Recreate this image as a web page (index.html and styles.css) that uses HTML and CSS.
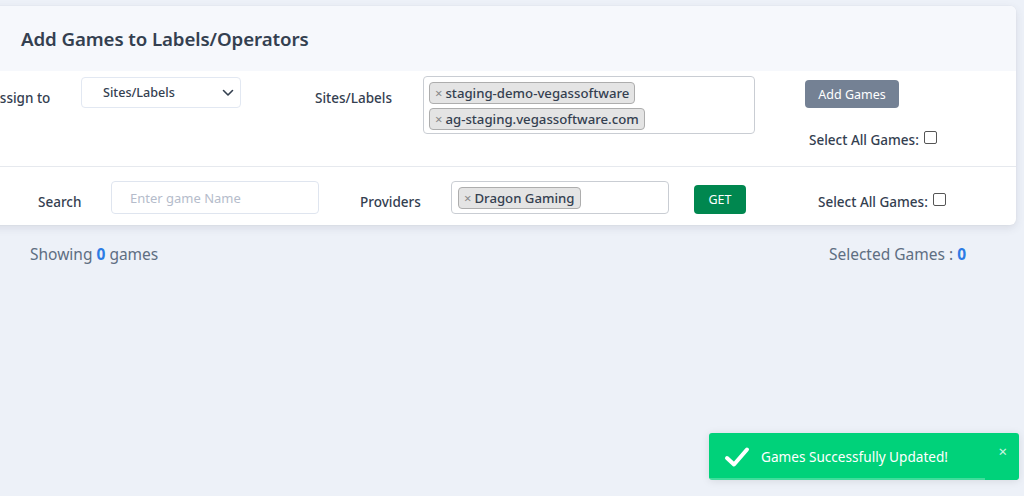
FILE: index.html
```html
<!DOCTYPE html>
<html>
<head>
<meta charset="utf-8">
<link rel="stylesheet" href="styles.css">
</head>
<body>
<div class="page">
  <div class="card">
    <div class="card-header">
      <h2 class="title">Add Games to Labels/Operators</h2>
    </div>
    <div class="row row-assign">
      <div class="label label-assign">Assign to</div>
      <div class="select">
        <span>Sites/Labels</span>
        <svg class="chev" width="12" height="8" viewBox="0 0 12 8"><path d="M1.5 1.5 L6 6 L10.5 1.5" fill="none" stroke="#344050" stroke-width="1.6" stroke-linecap="round" stroke-linejoin="round"/></svg>
      </div>
      <div class="label label-sites">Sites/Labels</div>
      <div class="multi multi-sites">
        <span class="tag"><span class="x">×</span>staging-demo-vegassoftware</span>
        <span class="tag"><span class="x">×</span>ag-staging.vegassoftware.com</span>
      </div>
      <div class="actions">
        <button class="btn btn-secondary">Add Games</button>
        <label class="check-label">Select All Games: <span class="checkbox"></span></label>
      </div>
    </div>
    <div class="row row-search">
      <div class="label label-search">Search</div>
      <div class="input">Enter game Name</div>
      <div class="label label-providers">Providers</div>
      <div class="multi multi-providers">
        <span class="tag"><span class="x">×</span>Dragon Gaming</span>
      </div>
      <button class="btn btn-success">GET</button>
      <label class="check-label check-2">Select All Games: <span class="checkbox"></span></label>
    </div>
  </div>
  <div class="summary">
    <div>Showing <b>0</b> games</div>
    <div>Selected Games : <b>0</b></div>
  </div>
</div>
<div class="toast">
  <svg class="check" width="26" height="22" viewBox="0 0 26 22"><path d="M3 12 L10 18.5 L23 3.5" fill="none" stroke="#fff" stroke-width="4" stroke-linecap="round" stroke-linejoin="round"/></svg>
  <span class="toast-text">Games Successfully Updated!</span>
  <span class="toast-close">×</span>
  <div class="toast-bar"></div>
</div>
</body>
</html>
```

FILE: styles.css
```css
* { box-sizing: border-box; }
html, body { margin: 0; padding: 0; }
body {
  background: #edf1f8;
  font-family: "Noto Sans", "Open Sans", sans-serif;
  color: #344050;
  width: 1024px;
  height: 496px;
  overflow: hidden;
  position: relative;
}
.page { padding-top: 6px; }
.card {
  margin-left: -40px;
  width: 1056px;
  background: #fff;
  border-radius: 6px;
  box-shadow: 0 3px 8px rgba(65, 69, 88, 0.12), 0 0 2px rgba(0,0,0,0.05);
  overflow: hidden;
}
.card-header {
  background: #f6f8fc;
  height: 65px;
  display: flex;
  align-items: center;
  padding-left: 61px;
}
.title {
  margin: 0;
  font-size: 18.7px;
  font-weight: 600;
  color: #344050;
  letter-spacing: -0.1px;
}
.row {
  display: flex;
  align-items: flex-start;
}
.row-assign {
  height: 96px;
  padding-top: 5px;
  border-bottom: 1px solid #e6e9ee;
}
.label {
  font-size: 13.5px;
  font-weight: 500;
  color: #344050;
}
.label-assign { margin-left: 31px; margin-top: 13px; width: 90px; }
.select {
  width: 160px;
  height: 31px;
  border: 1px solid #e2e8f2;
  border-radius: 4px;
  display: flex;
  align-items: center;
  padding-left: 21px;
  padding-right: 6px;
  font-size: 12.6px;
  font-weight: 500;
  margin-top: 1px;
}
.select span { flex: 1; }
.label-sites { margin-left: 74px; margin-top: 13px; width: 108px; }
.multi {
  border: 1px solid #c9cdd3;
  border-radius: 4px;
  padding: 5px 5px 2px 5px;
  display: flex;
  flex-wrap: wrap;
  align-content: flex-start;
}
.multi-sites { width: 332px; height: 58px; }
.tag {
  display: inline-flex;
  align-items: center;
  background: #e4e4e4;
  border: 1px solid #adadad;
  border-radius: 4px;
  height: 22px;
  padding: 0 5px 0 5px;
  margin-bottom: 4px;
  font-size: 13.2px;
  font-weight: 500;
  color: #344050;
  margin-right: 40px;
  white-space: nowrap;
}
.tag .x { color: #888; font-size: 13px; margin-right: 3px; font-weight: 400; }
.actions {
  margin-left: 50px;
  display: flex;
  flex-direction: column;
  align-items: flex-start;
  padding-top: 4px;
}
.btn {
  border: none;
  border-radius: 4px;
  color: #fff;
  font-family: inherit;
  font-size: 12.5px;
  cursor: pointer;
  padding: 0;
}
.btn-secondary {
  background: #748194;
  width: 94px;
  height: 28px;
}
.check-label {
  display: flex;
  align-items: center;
  font-size: 13.5px;
  font-weight: 500;
  color: #344050;
  white-space: nowrap;
}
.actions .check-label { margin-top: 23px; margin-left: 4px; }
.checkbox {
  display: inline-block;
  width: 13px;
  height: 13px;
  border: 1px solid #555;
  border-radius: 2px;
  margin-left: 5px;
  position: relative;
  top: -3px;
  background: #fff;
}
.row-search { height: 58px; padding-top: 13px; }
.label-search { margin-left: 78px; margin-top: 13px; width: 73px; }
.input {
  width: 208px;
  height: 33px;
  border: 1px solid #dfe5ef;
  border-radius: 4px;
  padding-left: 18px;
  font-size: 13px;
  color: #b5bccb;
  display: flex;
  align-items: center;
  margin-top: 1px;
}
.label-providers { margin-left: 41px; margin-top: 13px; width: 91px; }
.multi-providers { width: 218px; height: 33px; margin-top: 1px; padding: 5px 6px; }
.multi-providers .tag { margin-right: 0; }
.btn-success {
  background: #00874f;
  width: 52px;
  height: 29px;
  margin-left: 25px;
  margin-top: 5px;
  font-size: 12.5px;
}
.check-2 { margin-left: 72px; margin-top: 13px; }
.summary {
  display: flex;
  justify-content: space-between;
  padding: 18px 58px 0 30px;
  font-size: 15.5px;
  color: #5e6e82;
}
.summary b { color: #2c7be5; font-weight: 700; }
.toast {
  position: absolute;
  left: 709px;
  top: 433px;
  width: 310px;
  height: 47px;
  background: #00d27a;
  border-radius: 3px;
  box-shadow: 0 1px 8px rgba(0,0,0,0.1);
  display: flex;
  align-items: center;
  color: #fff;
}
.toast .check { margin-left: 15px; margin-right: 11px; }
.toast-text { font-size: 13.6px; font-weight: 400; }
.toast-close {
  position: absolute;
  right: 12px;
  top: 8px;
  font-size: 15px;
  opacity: 0.8;
}
.toast-bar {
  position: absolute;
  left: 0;
  bottom: 0;
  width: 276px;
  height: 2px;
  background: rgba(255,255,255,0.25);
}
```
